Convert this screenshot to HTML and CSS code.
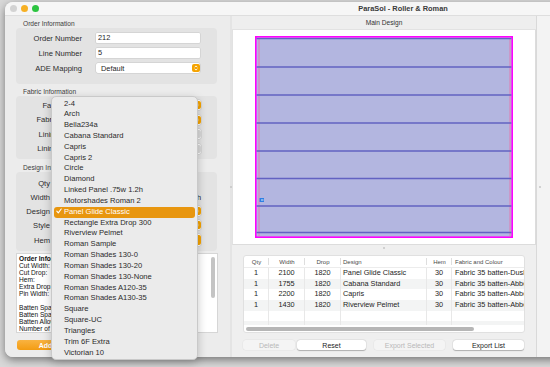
FILE: index.html
```html
<!DOCTYPE html>
<html lang="en">
<head>
    <link rel="stylesheet" href="styles.css">
</head>
<body>
    <div class="window">
        <div class="titlebar">
            <div class="lights">
                <span class="light light-close"></span>
                <span class="light light-min"></span>
                <span class="light light-max"></span>
            </div>
            <div class="title">ParaSol - Roller &amp; Roman</div>
            <div></div>
        </div>

        <div class="content">
            <aside class="sidebar">
                <div class="section-label">Order Information</div>
                <div class="group group-order">
                    <div class="row">
                        <label>Order Number</label>
                        <div class="field">212</div>
                    </div>
                    <div class="row">
                        <label>Line Number</label>
                        <div class="field">5</div>
                    </div>
                    <div class="row">
                        <label>ADE Mapping</label>
                        <div class="popup">
                            <span>Default</span>
                            <span class="stepper"><svg width="8" height="8" viewBox="0 0 8 8"><path d="M2.6 3.3 4 1.9 5.4 3.3M2.6 4.7 4 6.1 5.4 4.7" fill="none" stroke="#fff" stroke-width="0.9"/></svg></span>
                        </div>
                    </div>
                </div>

                <div class="section-label">Fabric Information</div>
                <div class="group group-fabric">
                    <div class="row">
                        <label>Fabric Type</label>
                        <div class="popup">
                            <span>Fabric 35</span>
                            <span class="stepper"><svg width="8" height="8" viewBox="0 0 8 8"><path d="M2.6 3.3 4 1.9 5.4 3.3M2.6 4.7 4 6.1 5.4 4.7" fill="none" stroke="#fff" stroke-width="0.9"/></svg></span>
                        </div>
                    </div>
                    <div class="row">
                        <label>Fabric Colour</label>
                        <div class="popup">
                            <span>Dusk</span>
                            <span class="stepper"><svg width="8" height="8" viewBox="0 0 8 8"><path d="M2.6 3.3 4 1.9 5.4 3.3M2.6 4.7 4 6.1 5.4 4.7" fill="none" stroke="#fff" stroke-width="0.9"/></svg></span>
                        </div>
                    </div>
                    <div class="row">
                        <label>Lining Fabric</label>
                        <div class="popup popup-off">
                            <span>None</span>
                            <span class="stepper"></span>
                        </div>
                    </div>
                    <div class="row">
                        <label>Lining Colour</label>
                        <div class="popup popup-off">
                            <span>None</span>
                            <span class="stepper"></span>
                        </div>
                    </div>
                </div>

                <div class="section-label">Design Information</div>
                <div class="group group-design">
                    <div class="row">
                        <label>Qty</label>
                        <div class="field field-short">1</div>
                    </div>
                    <div class="row">
                        <label>Width</label>
                        <div class="field-line">
                            <div class="field field-short">2100</div>
                            <span class="note">Match Width</span>
                        </div>
                    </div>
                    <div class="row">
                        <label>Design</label>
                        <div class="popup">
                            <span>Panel Glide Classic</span>
                            <span class="stepper"><svg width="8" height="8" viewBox="0 0 8 8"><path d="M2.6 3.3 4 1.9 5.4 3.3M2.6 4.7 4 6.1 5.4 4.7" fill="none" stroke="#fff" stroke-width="0.9"/></svg></span>
                        </div>
                    </div>
                    <div class="row">
                        <label>Style</label>
                        <div class="popup">
                            <span>Standard</span>
                            <span class="stepper"><svg width="8" height="8" viewBox="0 0 8 8"><path d="M2.6 3.3 4 1.9 5.4 3.3M2.6 4.7 4 6.1 5.4 4.7" fill="none" stroke="#fff" stroke-width="0.9"/></svg></span>
                        </div>
                    </div>
                    <div class="row row-hem">
                        <label>Hem</label>
                        <div class="popup popup-tall">
                            <span>30</span>
                            <span class="stepper stepper-tall"></span>
                        </div>
                    </div>
                </div>

                <div class="summary">
                    <div class="summary-text">
                        <b>Order Information</b><br>
                        Cut Width:<br>
                        Cut Drop:<br>
                        Hem:<br>
                        Extra Drop:<br>
                        Pin Width:<br>
                        <br>
                        Batten Spacing:<br>
                        Batten Spacing:<br>
                        Batten Allowance:<br>
                        Number of Battens:
                    </div>
                    <div class="summary-scroll"></div>
                </div>

                <button class="add-btn">Add to List</button>

                <div class="menu">
                    <div class="menu-item">2-4</div>
                    <div class="menu-item">Arch</div>
                    <div class="menu-item">Bella234a</div>
                    <div class="menu-item">Cabana Standard</div>
                    <div class="menu-item">Capris</div>
                    <div class="menu-item">Capris 2</div>
                    <div class="menu-item">Circle</div>
                    <div class="menu-item">Diamond</div>
                    <div class="menu-item">Linked Panel .75w 1.2h</div>
                    <div class="menu-item">Motorshades Roman 2</div>
                    <div class="menu-item menu-item-selected"><svg class="check" width="6" height="6" viewBox="0 0 6 6"><path d="M0.8 3.2 2.3 4.8 5.2 1" fill="none" stroke="#fff" stroke-width="1.1" stroke-linecap="round" stroke-linejoin="round"/></svg>Panel Glide Classic</div>
                    <div class="menu-item">Rectangle Extra Drop 300</div>
                    <div class="menu-item">Riverview Pelmet</div>
                    <div class="menu-item">Roman Sample</div>
                    <div class="menu-item">Roman Shades 130-0</div>
                    <div class="menu-item">Roman Shades 130-20</div>
                    <div class="menu-item">Roman Shades 130-None</div>
                    <div class="menu-item">Roman Shades A120-35</div>
                    <div class="menu-item">Roman Shades A130-35</div>
                    <div class="menu-item">Square</div>
                    <div class="menu-item">Square-UC</div>
                    <div class="menu-item">Triangles</div>
                    <div class="menu-item">Trim 6F Extra</div>
                    <div class="menu-item">Victorian 10</div>
                </div>
            </aside>

            <div class="divider"><span class="grip"></span></div>

            <main class="design">
                <div class="design-head">Main Design</div>
                <div class="canvas">
                    <svg class="blind" width="258" height="202" viewBox="0 0 258 202">
                        <rect x="0.8" y="0.8" width="256.4" height="200.4" fill="#b3b6e0" stroke="#ff00ff" stroke-width="1.6"/>
                        <g stroke="#e07db2" stroke-width="1">
                            <line x1="4" y1="1.6" x2="4" y2="200.4"/>
                            <line x1="255" y1="1.6" x2="255" y2="200.4"/>
                        </g>
                        <g stroke="#6262c2" stroke-width="1.4">
                            <line x1="1.6" y1="2.6" x2="256.4" y2="2.6"/>
                            <line x1="1.6" y1="31" x2="256.4" y2="31"/>
                            <line x1="1.6" y1="59" x2="256.4" y2="59"/>
                            <line x1="1.6" y1="87" x2="256.4" y2="87"/>
                            <line x1="1.6" y1="115" x2="256.4" y2="115"/>
                            <line x1="1.6" y1="142.5" x2="256.4" y2="142.5"/>
                            <line x1="1.6" y1="170" x2="256.4" y2="170"/>
                            <line x1="1.6" y1="196.5" x2="256.4" y2="196.5"/>
                        </g>
                        <rect x="4.5" y="162" width="4.5" height="4" fill="#2f7fe2"/>
                        <rect x="6" y="163" width="2.5" height="2" fill="#7fb4f0"/>
                    </svg>
                </div>
                <div class="splitter"><span class="grip"></span></div>

                <div class="table-wrap">
                    <div class="table">
                        <div class="trow thead">
                            <div class="c-num">Qty</div>
                            <div class="c-num">Width</div>
                            <div class="c-num">Drop</div>
                            <div>Design</div>
                            <div class="c-num">Hem</div>
                            <div>Fabric and Colour</div>
                        </div>
                        <div class="tbody">
                            <div class="trow">
                                <div class="c-num">1</div>
                                <div class="c-num">2100</div>
                                <div class="c-num">1820</div>
                                <div>Panel Glide Classic</div>
                                <div class="c-num">30</div>
                                <div>Fabric 35 batten-Dusk</div>
                            </div>
                            <div class="trow">
                                <div class="c-num">1</div>
                                <div class="c-num">1755</div>
                                <div class="c-num">1820</div>
                                <div>Cabana Standard</div>
                                <div class="c-num">30</div>
                                <div>Fabric 35 batten-Abbey</div>
                            </div>
                            <div class="trow">
                                <div class="c-num">1</div>
                                <div class="c-num">2200</div>
                                <div class="c-num">1820</div>
                                <div>Capris</div>
                                <div class="c-num">30</div>
                                <div>Fabric 35 batten-Abbey</div>
                            </div>
                            <div class="trow">
                                <div class="c-num">1</div>
                                <div class="c-num">1430</div>
                                <div class="c-num">1820</div>
                                <div>Riverview Pelmet</div>
                                <div class="c-num">30</div>
                                <div>Fabric 35 batten-Abbey</div>
                            </div>
                            <div class="trow">
                                <div></div><div></div><div></div><div></div><div></div><div></div>
                            </div>
                            <div class="trow">
                                <div></div><div></div><div></div><div></div><div></div><div></div>
                            </div>
                        </div>
                    </div>
                    <div class="hscroll"><span class="hscroll-thumb"></span></div>
                </div>

                <div class="actions">
                    <button class="btn btn-off btn-delete">Delete</button>
                    <button class="btn btn-reset">Reset</button>
                    <button class="btn btn-off btn-wide">Export Selected</button>
                    <button class="btn btn-wide">Export List</button>
                </div>
            </main>

            <div class="side-strip"><span class="grip"></span></div>
        </div>
    </div>
</body>
</html>
```

FILE: styles.css
```css
* {
    box-sizing: border-box;
}

body {
    margin: 0;
    padding: 2px 0 0 5px;
    height: 367px;
    overflow: hidden;
    background: #d8d8d8;
    font-family: 'Liberation Sans', Arial, sans-serif;
    color: #252525;
}

.window {
    width: 796px;
    height: 355px;
    background: #ececec;
    border-radius: 8px;
    box-shadow: 0 3px 8px rgba(0, 0, 0, 0.45);
    display: flex;
    flex-direction: column;
}

/* Title bar */
.titlebar {
    height: 14px;
    display: grid;
    grid-template-columns: 1fr auto 1fr;
    align-items: center;
    background: #f6f6f6;
    border-bottom: 1px solid #dedede;
    border-radius: 8px 8px 0 0;
}

.lights {
    display: flex;
    gap: 4px;
    padding-left: 4.5px;
}

.light {
    width: 7px;
    height: 7px;
    border-radius: 50%;
}

.light-close { background: #d3d3d3; }
.light-min { background: #f6b024; }
.light-max { background: #2cc440; }

.title {
    font-size: 7.4px;
    font-weight: bold;
    color: #3a3a3a;
}

.content {
    flex: 1;
    display: flex;
    min-height: 0;
}

/* Sidebar */
.sidebar {
    width: 225px;
    padding-left: 11px;
    position: relative;
    background: #ececec;
    border-bottom-left-radius: 8px;
}

.section-label {
    height: 9px;
    line-height: 9px;
    margin-top: 3px;
    padding-left: 7px;
    font-size: 6.6px;
    color: #3c3c3c;
}

.section-label:nth-of-type(5) {
    margin-top: 4px;
}

.group {
    width: 201px;
    background: #e3e3e3;
    border-radius: 4px;
    display: flex;
    flex-direction: column;
}

.group-order {
    height: 56px;
    padding-top: 5px;
    gap: 5px;
}

.group-fabric {
    height: 63px;
    padding-top: 4px;
    gap: 4.5px;
}

.group-design {
    height: 79px;
    padding-top: 6px;
    gap: 4px;
}

.row {
    height: 10px;
    display: grid;
    grid-template-columns: 66px 104px;
    column-gap: 14px;
    align-items: center;
}

.group-fabric .row {
    grid-template-columns: 66px 105px;
}

.group-design .row {
    grid-template-columns: 34px 141px;
    column-gap: 10px;
}

.group-design .row-hem {
    height: 12px;
}

.row label {
    text-align: right;
    font-size: 7.6px;
    color: #2c2c2c;
    white-space: nowrap;
}

.field {
    height: 10px;
    line-height: 10px;
    padding-left: 2px;
    background: #fff;
    border-radius: 1px;
    box-shadow: 0 0 0 0.5px rgba(0, 0, 0, 0.12);
    font-size: 7.4px;
}

.field-short {
    width: 70px;
}

.field-line {
    display: flex;
    align-items: center;
    justify-content: space-between;
}

.note {
    font-size: 7.4px;
}

.popup {
    height: 10px;
    display: flex;
    align-items: center;
    justify-content: space-between;
    padding-left: 5px;
    background: #fff;
    border-radius: 2px;
    box-shadow: 0 0 0 0.5px rgba(0, 0, 0, 0.12);
    font-size: 7.4px;
}

.popup-tall {
    height: 12px;
}

.stepper {
    width: 8px;
    height: 8px;
    margin-right: 0.5px;
    background: #f5a300;
    border-radius: 2px;
    display: flex;
}

.stepper-tall {
    height: 10px;
    width: 9px;
}

.popup-off .stepper {
    background: #d9d9d9;
}

.summary {
    width: 202px;
    height: 80px;
    margin-top: 2px;
    background: #fff;
    border: 1px solid #d6d6d6;
    display: flex;
}

.summary-text {
    flex: 1;
    padding: 1px 0 0 2px;
    font-size: 6.6px;
    line-height: 7px;
    color: #111;
    white-space: nowrap;
    overflow: hidden;
}

.summary-scroll {
    width: 4px;
    height: 41px;
    margin: 3px 2px 0 2px;
    background: #c4c4c4;
    border-radius: 2px;
}

.add-btn {
    display: block;
    width: 80px;
    height: 10px;
    margin: 7px 0 0 1px;
    padding: 0;
    border: none;
    border-radius: 3px;
    background: linear-gradient(#f9b341, #f39c12);
    color: #fff;
    font-family: inherit;
    font-size: 7px;
    font-weight: bold;
}

/* Popup menu open over the sidebar */
.menu {
    position: absolute;
    left: 46px;
    top: 80px;
    width: 147px;
    padding: 1.5px 2px 1px;
    background: #ebebeb;
    border: 1px solid #c9c9c9;
    border-radius: 5px;
    box-shadow: 0 3px 10px rgba(0, 0, 0, 0.22);
    z-index: 2;
}

.menu-item {
    height: 10.83px;
    line-height: 10.83px;
    padding-left: 10px;
    font-size: 7.6px;
    color: #2a2a2a;
    white-space: nowrap;
}

.menu-item-selected {
    background: #e8960f;
    color: #fff;
    border-radius: 3px;
}

.check {
    display: inline-block;
    margin: 0 2px 0 -8px;
    vertical-align: -0.5px;
}

/* Splitters */
.divider {
    width: 2px;
    background: #e4e4e4;
    display: flex;
    align-items: center;
}

.grip {
    width: 2px;
    height: 2px;
    border-radius: 50%;
    background: #c6c6c6;
}

/* Main design area */
.design {
    width: 304px;
    display: flex;
    flex-direction: column;
    background: #efefef;
}

.design-head {
    height: 14px;
    line-height: 14px;
    text-align: center;
    font-size: 6.6px;
    color: #333;
    background: #eeeeee;
    border-bottom: 1px solid #e2e2e2;
}

.canvas {
    height: 215px;
    display: flex;
    align-items: center;
    justify-content: center;
    background: #fff;
    border-left: 1px solid #e2e2e2;
    border-right: 1px solid #dcdcdc;
    border-bottom: 1px solid #dcdcdc;
}

.blind {
    display: block;
}

.splitter {
    height: 10px;
    display: flex;
    justify-content: center;
    align-items: flex-start;
    padding-top: 2px;
}

.table-wrap {
    width: 282px;
    height: 78px;
    margin-left: 11px;
    background: #fff;
    border: 1px solid #e0e0e0;
    border-radius: 3px;
    overflow: hidden;
}

.table {
    width: 320px;
}

.trow {
    display: grid;
    grid-template-columns: 25px 36px 36px 86px 25px 112px;
    height: 10.7px;
    line-height: 10.7px;
    font-size: 7.3px;
    color: #1e1e1e;
    white-space: nowrap;
}

.trow > div {
    padding-left: 2px;
    border-right: 1px solid #e8e8e8;
    overflow: hidden;
}

.trow > div:nth-child(6) {
    padding-left: 3px;
}

.trow > .c-num {
    padding-left: 0;
    text-align: center;
}

.thead {
    height: 12px;
    line-height: 12px;
    font-size: 6px;
    color: #4a4a4a;
    border-bottom: 1px solid #ececec;
}

.thead > div {
    border-right: none;
    background: linear-gradient(#dedede, #dedede) right center / 1px 7px no-repeat;
}

.tbody {
    height: 57px;
    overflow: hidden;
}

.tbody .trow:nth-child(even) {
    background: #f3f4f4;
}

.hscroll {
    height: 7px;
    padding: 2px 0 0 2px;
}

.hscroll-thumb {
    display: block;
    width: 228px;
    height: 3.5px;
    background: #b6b6b6;
    border-radius: 2px;
}

.actions {
    display: flex;
    gap: 8px;
    margin: 7px 0 0 11px;
}

.btn {
    height: 10px;
    padding: 0;
    border: none;
    border-radius: 3px;
    background: #fff;
    box-shadow: 0 0.5px 1px rgba(0, 0, 0, 0.25), 0 0 0 0.5px rgba(0, 0, 0, 0.06);
    font-family: inherit;
    font-size: 7px;
    color: #1c1c1c;
}

.btn-off {
    background: #f4f4f4;
    color: #b9b9b9;
    box-shadow: 0 0 0 0.5px rgba(0, 0, 0, 0.05);
}

.btn-delete {
    width: 52px;
    margin-right: -6px;
}

.btn-reset {
    width: 69px;
}

.btn-wide {
    width: 71px;
}

.side-strip {
    flex: 1;
    background: #f3f3f3;
    border-left: 1px solid #d9d9d9;
    display: flex;
    align-items: center;
    padding-left: 2px;
}
```
